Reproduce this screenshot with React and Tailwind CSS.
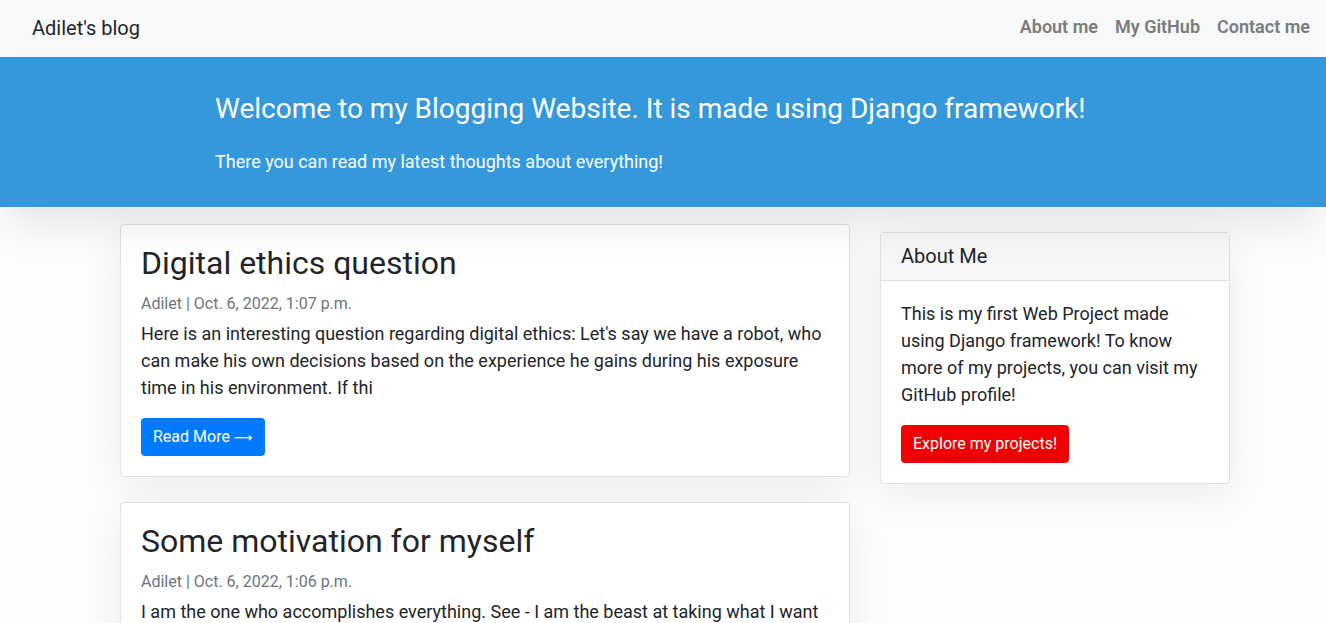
const posts = [
  {
    title: "Digital ethics question",
    meta: "Adilet | Oct. 6, 2022, 1:07 p.m.",
    body: "Here is an interesting question regarding digital ethics: Let's say we have a robot, who can make his own decisions based on the experience he gains during his exposure time in his environment. If thi",
  },
  {
    title: "Some motivation for myself",
    meta: "Adilet | Oct. 6, 2022, 1:06 p.m.",
    body: "I am the one who accomplishes everything. See - I am the beast at taking what I want and I will never stop until I get to the top of the mountain. Nothing can stop me",
  },
];

const App = () => {
  return (
    <div className="min-h-screen bg-[#fdfdfd] text-[#212529] font-['Roboto',sans-serif] overflow-hidden">
      <nav className="h-[57px] bg-[#f8f9fa] flex items-center justify-between pl-8 pr-4 pb-[2px]">
        <a className="text-[20px] text-[#212529]">Adilet's blog</a>
        <div className="flex items-center gap-[17px] text-[18px] font-semibold text-[#7b7c7d] pb-[2px]">
          <a>About me</a>
          <a>My GitHub</a>
          <a>Contact me</a>
        </div>
      </nav>

      <header className="relative z-10 h-[150px] bg-[#3498db] text-white pl-[215px] pt-[33px] shadow-[0_24px_40px_-8px_rgba(0,0,0,0.1)]">
        <h1 className="text-[28px] leading-[38px]">
          Welcome to my Blogging Website. It is made using Django framework!
        </h1>
        <p className="text-[18px] leading-[27px] mt-[20px]">
          There you can read my latest thoughts about everything!
        </p>
      </header>

      <main className="flex items-start gap-[30px] ml-[120px] mt-[17px]">
        <div className="w-[730px] flex flex-col gap-[25px]">
          {posts.map((p) => (
            <div
              key={p.title}
              className="bg-white border border-[#dfdfdf] rounded-[4px] px-5 pt-[19px] pb-5 shadow-[0_10px_40px_rgba(0,0,0,0.07)]"
            >
              <h2 className="text-[32px] leading-[38px]">{p.title}</h2>
              <p className="text-[16px] leading-[24px] text-[#6c757d] mt-[10px]">{p.meta}</p>
              <p className="text-[18px] leading-[27px] mt-[4px]">{p.body}</p>
              <button className="mt-[17px] h-[38px] px-3 rounded-[4px] bg-[#007bff] text-white text-[16px]">
                Read More <span className="font-['DejaVu_Sans',sans-serif] text-[13px]">⟶</span>
              </button>
            </div>
          ))}
        </div>

        <div className="w-[350px] mt-[8px] bg-white border border-[#dfdfdf] rounded-[4px] shadow-[0_10px_40px_rgba(0,0,0,0.07)]">
          <div className="h-[48px] px-5 pb-[2px] flex items-center bg-[#f7f7f7] border-b border-[#dfdfdf] text-[20px]">
            About Me
          </div>
          <div className="p-5 pt-[19px]">
            <p className="text-[18px] leading-[27px]">
              This is my first Web Project made using Django framework! To know more of my projects, you can visit my GitHub profile!
            </p>
            <button className="mt-[17px] h-[38px] px-3 rounded-[4px] bg-[#f00000] text-white text-[16px]">
              Explore my projects!
            </button>
          </div>
        </div>
      </main>
    </div>
  );
};

export default App;
